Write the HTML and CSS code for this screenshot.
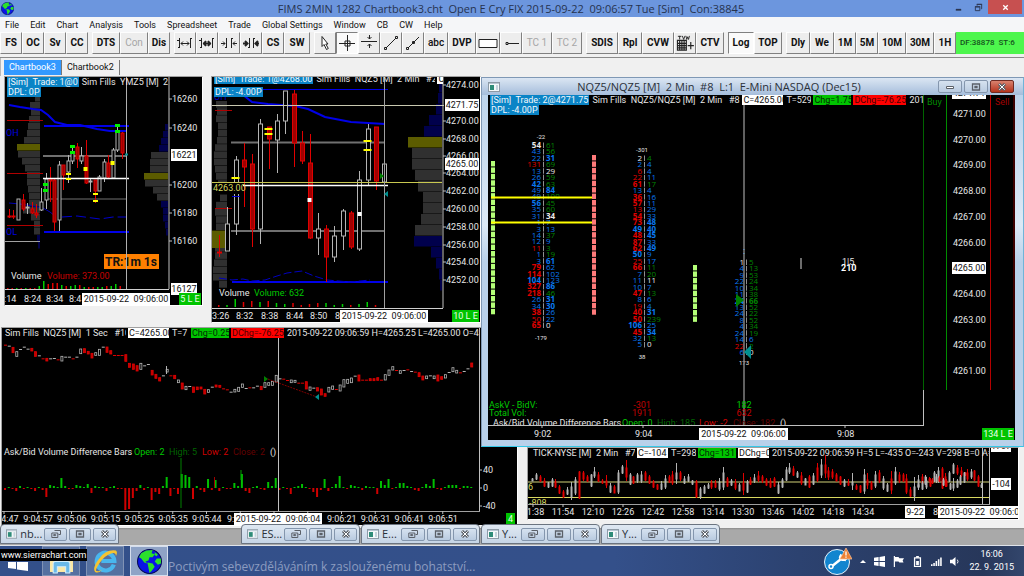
FILE: index.html
```html
<!DOCTYPE html>
<html lang="en">
<head>
  <meta charset="UTF-8" />
  <meta name="viewport" content="width=device-width, initial-scale=1.0" />
  <title>FIMS 2MIN 1282 Chartbook3.cht</title>
  <link rel="stylesheet" href="styles.css">
</head>
<body>
  <svg class="defs" aria-hidden="true">
    <symbol id="globe" viewBox="0 0 24 24">
      <circle cx="12" cy="12" r="11.5" fill="#0a14e6" stroke="#050a50" />
      <path d="M4 4 L9 1.5 L15 1 L14 4 L17 5 L15 8 L12 8 L11 11 L8 12 L10 14 L7 13 L4 9 L2 8Z M10 13 L15 14 L17 17 L14 21 L12 23 L11 18Z M17 3 L20 5 L19 7 L17 6Z M19 9 L23 9 L23 14 L20 15 L17 12Z" fill="#2be02b" />
    </symbol>
    <symbol id="docicon" viewBox="0 0 12 10">
      <rect x=".5" y=".5" width="11" height="9" fill="#f4f8fa" stroke="#8d9aa6" />
      <path d="M1 1h10v1H1z" fill="#b7c6d2" />
      <rect x="2" y="3" width="4" height="5" fill="#2f8c78" />
      <rect x="8" y="3" width="2" height="5" fill="#c3d3dc" />
    </symbol>
    <symbol id="restore" viewBox="0 0 10 8">
      <path d="M3.5 .5h6v4h-2M.8 3h6v4.5h-6zM2.7 4.6h2v1h-2z" fill="none" stroke="#5b6068" />
    </symbol>
    <symbol id="maximize" viewBox="0 0 10 8">
      <path d="M1.5 1h7v6h-7zM4 3.5h2v1H4z" fill="none" stroke="#5b6068" stroke-width="1.3" />
    </symbol>
    <symbol id="close" viewBox="0 0 10 8">
      <path d="M2 1l6 6M8 1l-6 6" stroke="#5b6068" stroke-width="3" />
      <path d="M2.3 1.3l5.4 5.4M7.7 1.3L2.3 6.7" stroke="#fff" stroke-width="1" />
    </symbol>
  </svg>

  <header class="titlebar">
    <svg class="app-icon"><use href="#globe" /></svg>
    <h1>FIMS 2MIN 1282 Chartbook3.cht&nbsp; Open E Cry FIX 2015-09-22&nbsp; 09:06:57 Tue [Sim]&nbsp; Con:38845</h1>
    <div class="sys">
      <button aria-label="Minimize"><svg viewBox="0 0 10 10"><path d="M2 7.500h6" stroke="#2b3550" stroke-width="2" /></svg></button>
      <button aria-label="Restore"><svg viewBox="0 0 10 10"><path d="M1.500 4.500h5v4h-5zM1 4h6M3.500 3V1.500h5v5H8M3 1.500h6" fill="none" stroke="#2b3550" /></svg></button>
      <button class="sys-close" aria-label="Close"><svg viewBox="0 0 10 10"><path d="M2.500 2.500l5 5M7.500 2.500l-5 5" stroke="#fff" stroke-width="1.500" /></svg></button>
    </div>
  </header>

  <nav class="menubar">
    <button>File</button><button>Edit</button><button>Chart</button><button>Analysis</button><button>Tools</button><button>Spreadsheet</button><button>Trade</button><button>Global Settings</button><button>Window</button><button>CB</button><button>CW</button><button>Help</button>
  </nav>

  <div class="toolbar">
    <div class="group">
      <button class="w22">FS</button><button class="w22">OC</button><button class="w22">Sv</button><button class="w22">CC</button>
    </div>
    <div class="group">
      <button class="w28">DTS</button><button class="w28" disabled>Con</button><button class="w22">Dis</button>
    </div>
    <div class="group">
      <button class="w22" aria-label="Increase bar spacing"><svg viewBox="0 0 16 16"><path d="M2.500 3v10M1 12.500h2M13.500 3v10M13 3.500h2M0 5.500h2M4 8.500h8M6 6.500l-2 2 2 2M10 6.500l2 2-2 2" /></svg></button>
      <button class="w22" aria-label="Increase bar spacing more"><svg viewBox="0 0 16 16"><path d="M2.500 3v10M1 12.500h2M13.500 3v10M13 3.500h2M0 5.500h2" /><path d="M4 8.500h8M7 6l-2 2.500 2 2.500M9 6l2 2.500-2 2.500" stroke-width="2" /></svg></button>
      <button class="w22" aria-label="Decrease bar spacing"><svg viewBox="0 0 16 16"><path d="M5.500 3v10M4 12.500h2M10.500 3v10M10 3.500h2M0 8.500h4M2 6.500l2 2-2 2M16 8.500h-4M14 6.500l-2 2 2 2" /></svg></button>
      <button class="w22" aria-label="Decrease bar spacing more"><svg viewBox="0 0 16 16"><path d="M6.500 3v10M5 12.500h2M10.500 3v10M10 3.500h2" /><path d="M0 8.500h5M2 6l2.500 2.500L2 11M16 8.500h-4M15 6l-2.500 2.500L15 11" stroke-width="2" /></svg></button>
      <button class="w22">CS</button><button class="w26">SW</button>
    </div>
    <div class="group">
      <button class="w22" aria-label="Pointer"><svg viewBox="0 0 16 16"><path d="M5 1.500v10l2-2 2.500 5 1.800-1-2.500-4.500H11z" fill="#fff" /></svg></button>
      <button class="w22 on" aria-label="Chart values"><svg viewBox="0 0 16 16"><path d="M8.500 0v16M0 8.500h17M6 6h5v5H6z" /></svg></button>
      <button class="w22" aria-label="Horizontal line"><svg viewBox="0 0 16 16"><path d="M0 6.500h16M8.500 0v4M6.500 2l2 2 2-2M8.500 13V9M6.500 11l2-2 2 2" /></svg></button>
      <button class="w22" aria-label="Line"><svg viewBox="0 0 16 16"><path d="M3 13L13 3M1.500 12.500h2v2h-2zM12.500 1.500h2v2h-2z" /></svg></button>
      <button class="w22" aria-label="Ray"><svg viewBox="0 0 16 16"><path d="M3 13L14 2M1.500 12.500h2v2h-2zM7.500 6.500h2v2h-2z" /></svg></button>
      <button class="w24 plain">abc</button><button class="w28">DVP</button>
      <button class="w24" aria-label="Rectangle"><svg class="wide" viewBox="0 0 20 16"><path d="M1 4.500h18v8H1z" fill="#fff" /></svg></button>
      <button class="w22" aria-label="Extended line"><svg viewBox="0 0 16 16"><path d="M3 7.500h2v2H3zM5 8.500h11" /></svg></button>
      <button class="w30" disabled>TC 1</button><button class="w30" disabled>TC 2</button>
    </div>
    <div class="group">
      <button class="w32">SDIS</button><button class="w24">Rpl</button><button class="w32">CVW</button>
      <button class="w22" aria-label="Trade volume window"><svg class="wide" viewBox="0 0 20 18"><path d="M2 1.500h4M4 1v4M7 1l1.500 4L10 1M11 1l1 4 1-3 1 3 1-4" /><path d="M1.500 6h10v11h-10zM1.500 9.500h10M1.500 12h10M1.500 14.500h10M4 6v11M6.500 6v11M9 6v11M13 12h7M16.500 8v8" stroke-width="1.300" /></svg></button>
      <button class="w28">CTV</button>
    </div>
    <div class="group">
      <button class="w26 on">Log</button><button class="w28">TOP</button>
    </div>
    <div class="group grow">
      <button class="w24">Dly</button><button class="w24">We</button><button class="w22">1M</button><button class="w22">5M</button><button class="w28">10M</button><button class="w28">30M</button><button class="w22">1H</button>
      <output class="feed">DF:38878&nbsp; ST:6</output>
    </div>
  </div>

  <div class="booktabs">
    <button class="book active">Chartbook3</button><button class="book">Chartbook2</button>
  </div>

  <main class="workspace">
    <section class="win win-ym">
      <svg id="ym" class="chart" viewBox="5 77 197 228"></svg>
      <div class="study">
        <span class="sim">[Sim]  Trade: 1@0</span><span class="cell">Sim Fills  YMZ5 [M]  2</span>
      </div>
      <span class="sim dpl">DPL: 0P</span>
    </section>

    <section class="win win-nq">
      <svg id="nq" class="chart" viewBox="212 77 268 245"></svg>
      <div class="study cut">
        <span class="sim">[Sim]  Trade: 1@4268.00</span><span class="cell name-nq">Sim Fills  NQZ5 [M]  2 Min   #2</span><span class="cell last">C</span>
      </div>
      <span class="sim dpl">DPL: -4.00P</span>
    </section>

    <section class="win win-sec">
      <svg id="sec" class="chart" viewBox="2 328 515 197"></svg>
      <div class="study">
        <span class="cell name-sec">Sim Fills  NQZ5 [M]  1 Sec   #10</span><span class="cell price last">C=4265.00</span><span class="cell count-s">T=7</span><span class="cell chg">Chg=0.25</span><span class="cell dchg">DChg=-76.25</span><span class="cell rest">2015-09-22 09:06:59 H=4265.25 L=4265.00 O=4265</span>
      </div>
    </section>

    <section class="win win-tick">
      <svg id="tick" class="chart" viewBox="528 448 490 71"></svg>
      <div class="study">
        <span class="cell name-tick">TICK-NYSE [M]  2 Min   #7</span><span class="cell tickval last">C=-104</span><span class="cell count">T=298</span><span class="cell chg">Chg=131</span><span class="cell tickval last">DChg=0</span><span class="cell rest">2015-09-22 09:06:59 H=5 L=-435 O=-243 V=298 B=0 A=0</span>
      </div>
    </section>

    <section class="mdi">
      <div class="mdi-title">
        <svg class="doc"><use href="#docicon" /></svg>
        <h2>NQZ5/NQZ5 [M]&nbsp; 2 Min&nbsp; #8&nbsp; L:1&nbsp; E-Mini NASDAQ (Dec15)</h2>
        <div class="mdi-buttons">
          <button aria-label="Minimize"><svg viewBox="0 0 10 8"><path d="M1.500 3.500h7v2h-7z" fill="#fff" stroke="#5b6068" /></svg></button>
          <button aria-label="Maximize"><svg><use href="#maximize" /></svg></button>
          <button class="red" aria-label="Close"><svg><use href="#close" /></svg></button>
        </div>
      </div>
      <div class="mdi-client">
        <svg id="foot" class="chart" viewBox="488 95 527 345"></svg>
        <div class="study">
          <span class="sim">[Sim]  Trade: 2@4271.75</span><span class="cell name-foot">Sim Fills  NQZ5/NQZ5 [M]  2 Min   #8</span><span class="cell price last">C=4265.00</span><span class="cell count">T=529</span><span class="cell chg">Chg=1.75</span><span class="cell dchg">DChg=-76.25</span><span class="cell rest">2015</span>
        </div>
        <span class="sim dpl">DPL: -4.00P</span>
      </div>
    </section>

    <div class="minimized" id="minimized"></div>
  </main>

  <footer class="taskbar">
    <p class="site">www.sierrachart.com</p>
    <div class="apps">
      <button class="app start" aria-label="Start"><svg viewBox="0 0 20 20"><path d="M0 4l8-1v7H0zM9 3l11-2v9H9zM0 11h8v7l-8-1zM9 11h11v9L9 18.500z" fill="#fff" /></svg></button>
      <button class="app" aria-label="Explorer"><svg viewBox="0 0 24 24"><path d="M1 5h8l1 2h13v15H1z" fill="#f3d372" /><path d="M1 9h22v13H1z" fill="#fbe9a6" /><path d="M4 23v-9q0-2 2-2h12q2 0 2 2v9h-4v-6H8v6z" fill="#69b9e8" stroke="#d4eefc" /></svg></button>
      <button class="app" aria-label="Internet Explorer"><svg viewBox="0 0 24 24"><path d="M20 15A8.500 8.500 0 1 1 20.500 11.500H8" fill="none" stroke="#49b7ee" stroke-width="4" /><path d="M2 22Q-1 18 6 9T22 1.500Q24 3 22 7Q22 3 18 4Q11 6 6 14T4 21Q6 22 9 20Q5 24 2 22z" fill="#f5c431" /></svg></button>
      <button class="app running" aria-label="Sierra Chart"><svg><use href="#globe" /></svg></button>
    </div>
    <p class="motto">Poctivým sebevzděláváním k zaslouženému bohatství...</p>
    <div class="tray">
      <svg class="wrench" viewBox="0 0 28 28"><circle cx="13" cy="15" r="12.500" fill="#1285cf" stroke="#e6f2fb" /><path d="M7 20L17 12M17 12l1-4M17 12l5 1M17.500 7.500q-3 4 0 5t5-1" fill="none" stroke="#fff" stroke-width="2.400" /><circle cx="7" cy="19.500" r="2" fill="#1285cf" stroke="#fff" stroke-width="1.500" /><path d="M22 1l6 11H16z" fill="#ee8133" stroke="#f9c29b" stroke-width=".7" /><path d="M22 4.500v4M22 9.500v1.300" stroke="#fff" stroke-width="1.300" /></svg>
      <svg class="t-up" viewBox="0 0 6 4"><path d="M0 4l3-3 3 3z" fill="#fff" /></svg>
      <svg class="t-icon" viewBox="0 0 12 12"><path d="M0 2l5-.800V5.500H0zM6 1l6-1v5.500H6zM0 6.500h5v4.300L0 10zM6 6.500h6V12l-6-1z" fill="#fff" /></svg>
      <svg class="t-icon" viewBox="0 0 12 12"><path d="M1.500 0v12" stroke="#fff" stroke-width="1.300" /><path d="M2 1h4l1 1.500h5L10.500 5l1 2H7L6 6H2z" fill="#fff" /></svg>
      <svg class="t-icon" viewBox="0 0 12 12"><path d="M2.800 2h6.400v9.500H2.800z" fill="none" stroke="#fff" stroke-width="1.400" /><path d="M4.500 0h3v2h-3zM4.500 5.500h3v4.500h-3z" fill="#fff" /></svg>
      <svg class="t-icon" viewBox="0 0 12 12"><path d="M0 9h1.700v2H0zM2.500 7.500h1.700V11H2.500zM5 5.500h1.700V11H5zM7.500 3.500h1.700V11H7.500zM10 1.500h1.700V11H10z" fill="#fff" /></svg>
      <svg class="t-icon" viewBox="0 0 12 12"><path d="M0 4h2.500L6 1v10L2.500 8H0z" fill="#fff" /><path d="M8 4q1.500 2 0 4" fill="none" stroke="#fff" /></svg>
      <p class="clock">16:06<br>22. 9. 2015</p>
    </div>
  </footer>

  <script src="charts.js"></script>
</body>
</html>
```

FILE: styles.css
```css
* {
  margin: 0;
  padding: 0;
  box-sizing: border-box;
}

body {
  display: flex;
  flex-direction: column;
  height: 100vh;
  overflow: hidden;
  background: #f0f0f0;
  color: #111;
  font-family: Roboto, "Open Sans", sans-serif;
  font-size: 9px;
  line-height: 10px;
}

button {
  font: inherit;
  color: inherit;
  background: none;
  border: 0;
}

svg {
  display: block;
}

.defs {
  position: absolute;
  width: 0;
  height: 0;
}

/* title bar */
.titlebar {
  display: flex;
  align-items: center;
  height: 17px;
  flex: none;
  background: #6c96de;
}

.app-icon {
  width: 13px;
  height: 13px;
  margin-left: 1px;
}

h1,
h2 {
  flex: 1;
  text-align: center;
  font-family: "Open Sans", "Noto Sans", sans-serif;
  font-size: 11px;
  font-weight: 400;
}

h1 {
  color: #26334f;
  padding-left: 60px;
}

.sys {
  display: flex;
  align-self: flex-start;
}

.sys button {
  width: 20px;
  height: 14px;
  display: flex;
  align-items: center;
  justify-content: center;
}

.sys svg {
  width: 9px;
  height: 9px;
}

.sys .sys-close {
  width: 34px;
  margin-right: 2px;
  background: #c75050;
}

/* menu */
.menubar {
  display: flex;
  gap: 11px;
  height: 15px;
  flex: none;
  align-items: center;
  padding-left: 5px;
  background: #f5f6f8;
}

/* toolbar */
.toolbar {
  display: flex;
  gap: 4px;
  height: 26px;
  flex: none;
  border-bottom: 1px solid #8a8a8a;
  font-size: 10px;
  font-weight: 700;
}

.group {
  display: flex;
  height: 22px;
}

.grow {
  flex: 1;
}

.group button {
  display: flex;
  align-items: center;
  justify-content: center;
  border: 1px solid #fdfdfd;
  border-right-color: #808080;
  border-bottom-color: #808080;
  background: #ededed;
  white-space: nowrap;
}

.group button:disabled {
  color: #a6a6a6;
  font-weight: 400;
}

.group .on {
  background: #fafafa;
  border-color: #808080 #fff #fff #808080;
}

.group .plain {
  font-weight: 500;
}

.group svg {
  width: 16px;
  height: 16px;
  fill: none;
  stroke: #222;
}

.group .wide {
  width: 20px;
}

.w22 { width: 22px; }
.w24 { width: 24px; }
.w26 { width: 26px; }
.w28 { width: 28px; }
.w30 { width: 30px; }
.w32 { width: 32px; }

.feed {
  flex: 1;
  overflow: hidden;
  white-space: nowrap;
  padding-left: 4px;
  background: #4df64d;
  color: #14501c;
  font-size: 8px;
  font-weight: 500;
  line-height: 22px;
}

.booktabs {
  display: flex;
  height: 18px;
  flex: none;
  padding-left: 3px;
  border-left: 1px solid #b8b8b8;
  align-items: center;
}

.book {
  height: 15px;
  padding: 0 5px;
  border-right: 1px solid #777;
}

.book.active {
  background: #3399ff;
  color: #fff;
}

/* chart windows */
.workspace {
  position: relative;
  flex: 1;
  background: linear-gradient(#f0f0f0 452px, #8a8a8a 452px, #a9a9a9 454px);
  color: #e6e6e6;
}

.win {
  position: absolute;
  border: 1px solid #a0a0a0;
  border-right-color: #fff;
  border-bottom-color: #fff;
  background: #000;
  overflow: hidden;
}

.win-ym { left: 4px; top: 0; width: 199px; height: 230px; }
.win-nq { left: 211px; top: 0; width: 270px; height: 247px; }
.win-sec { left: 1px; top: 251px; width: 517px; height: 199px; }
.win-tick { left: 527px; top: 371px; width: 492px; height: 73px; }

.chart {
  width: 100%;
  height: 100%;
}

.chart text {
  fill: #e6e6e6;
  white-space: pre;
}

.study {
  position: absolute;
  left: 2px;
  top: 0;
  display: flex;
  gap: 2px;
  white-space: pre;
}

.win-ym .study { width: 162px; overflow: hidden; }
.win-nq .study { width: 229px; overflow: hidden; }
.win-sec .study { width: 475px; }
.win-tick .study { left: 4px; width: 457px; }
.mdi-client .study { width: 433px; }

.study.cut {
  top: -3px;
}

.sim {
  background: #0a84c6;
  color: #f2f8fc;
  padding: 0 1px;
  flex: none;
}

.dpl {
  position: absolute;
  left: 2px;
  top: 10px;
  white-space: pre;
}

.cell {
  overflow: hidden;
  flex: none;
  padding-left: 1px;
}

.name-nq { width: 120px; }
.name-sec { width: 122px; }
.name-tick { width: 103px; }
.name-foot { width: 149px; }
.price { width: 41px; }
.tickval { width: 31px; }
.count { width: 26px; }
.count-s { width: 18px; }
.last { background: #fff; color: #111; }
.chg { width: 38px; background: #00c400; color: #032803; }
.dchg { width: 53px; background: #f00; color: #480000; }
.rest { flex: 1; }

/* floating footprint window */
.mdi {
  position: absolute;
  left: 481px;
  right: 0;
  top: 1px;
  height: 370px;
  display: flex;
  flex-direction: column;
  padding: 0 8px 6px 6px;
  background: linear-gradient(#b9d1ea, #dce9f6 40%, #b9d1ea 50%);
  border: 1px solid #7f98b5;
  border-bottom-color: #35c8e8;
  border-right-color: #6fb4d8;
}

.mdi-title {
  display: flex;
  align-items: center;
  height: 17px;
  margin: 0 -8px 0 -6px;
  padding: 0 9px 0 6px;
  background: linear-gradient(#dbe6f3, #a5bddb);
  color: #2a3038;
}

.doc {
  width: 12px;
  height: 10px;
}

.mdi-buttons {
  display: flex;
  gap: 2px;
}

.mdi-buttons button,
.mini button {
  display: flex;
  align-items: center;
  justify-content: center;
  width: 24px;
  height: 13px;
  border: 1px solid #8496ad;
  border-radius: 2px;
  background: linear-gradient(#d6e2f0, #b9cbe0);
}

.mdi-buttons .red {
  background: linear-gradient(#d9826f, #b5331c);
  border-color: #6e2a22;
}

.mdi-buttons svg,
.mini button svg {
  width: 10px;
  height: 8px;
}

.mdi-client {
  position: relative;
  flex: 1;
  min-height: 0;
  background: #000;
}

#foot .rows {
  font-family: "Open Sans", "Noto Sans", sans-serif;
  font-size: 8px;
}

/* minimized chart windows */
.minimized {
  position: absolute;
  left: 0;
  bottom: 1px;
  display: flex;
  gap: 1px;
}

.mini {
  display: flex;
  align-items: center;
  gap: 2px;
  width: 119px;
  height: 20px;
  padding: 0 2px 0 5px;
  border: 1px solid #6b7480;
  border-radius: 4px 4px 0 0;
  background: linear-gradient(#dfe8f2, #c6d5e6);
  color: #2a3038;
  font-family: "Open Sans", "Noto Sans", sans-serif;
  font-size: 11px;
}

.mini:first-child {
  margin-right: 121px;
}

.mini span {
  flex: 1;
  padding-left: 1px;
}

/* task bar */
.taskbar {
  position: relative;
  display: flex;
  align-items: center;
  height: 31px;
  flex: none;
  border-top: 1px solid #dfe3ea;
  background: linear-gradient(90deg, #33508a, #34508a 60%, #2c4270 78%, #27375a 96%, #33466c);
  color: #fff;
}

.site {
  position: absolute;
  left: 0;
  top: 3px;
  height: 12px;
  padding: 0 1px;
  background: #000;
  line-height: 12px;
  z-index: 1;
}

.apps {
  display: flex;
  gap: 6px;
  height: 30px;
}

.app {
  display: flex;
  align-items: center;
  justify-content: center;
  width: 38px;
  border: 1px solid #8193b5;
  background: #5570a0;
}

.app svg {
  width: 25px;
  height: 25px;
}

.start {
  width: 36px;
  border: 0;
  background: none;
}

.start svg {
  width: 20px;
  height: 20px;
}

.app.running {
  background: #8fa3c6;
  border-color: #d5deed;
}

.motto {
  flex: 1;
  font-family: "Open Sans", "Noto Sans", sans-serif;
  font-size: 12px;
  line-height: 14px;
  align-self: flex-end;
  color: #8c9cc0;
  padding-bottom: 2px;
}

.tray {
  display: flex;
  align-items: center;
  gap: 8px;
  padding-right: 10px;
}

.wrench {
  width: 28px;
  height: 28px;
}

.t-up {
  width: 6px;
  height: 4px;
}

.t-icon {
  width: 11px;
  height: 11px;
}

.clock {
  text-align: center;
  line-height: 13px;
}
```

FILE: charts.js
```javascript
const WHITE = '#b4b4b4';
const RED = '#e00000';

function rect(x, y, w, h, fill, extra = '') {
  return `<rect x="${x}" y="${y}" width="${w}" height="${h}" fill="${fill}" ${extra}/>`;
}

function line(x1, y1, x2, y2, color, w = 1) {
  return `<line x1="${x1}" y1="${y1}" x2="${x2}" y2="${y2}" stroke="${color}" stroke-width="${w}"/>`;
}

function poly(points, color, w = 1, dash = '') {
  return `<polyline points="${points}" fill="none" stroke="${color}" stroke-width="${w}" stroke-dasharray="${dash}"/>`;
}

// y is the middle of the text
function text(x, y, str, fill = '#e6e6e6', more = '') {
  return `<text x="${x}" y="${y + 3}" style="fill:${fill}" ${more}>${str}</text>`;
}

function tag(x, y, w, str, bg = '#fff', fg = '#111') {
  return rect(x, y - 6, w, 12, bg) + text(x + w / 2, y, str, fg, 'text-anchor="middle"');
}

// [x, high, top, bottom, low, red?]
function candles(list, w) {
  return list.map(([x, hi, top, bot, lo, down]) => {
    const c = down ? RED : WHITE;
    return line(x + 0.5, hi, x + 0.5, lo, c) +
      rect(x - w / 2 + 0.5, top, w, Math.max(bot - top, 1), down ? '#a00000' : '#000', `stroke="${c}"`);
  }).join('');
}

// horizontal volume profile, growing left from the right edge
function profile(lefts, right, y, step, olive, navyBefore, navyAfter) {
  return lefts.map((x, i) => {
    let c = '#303030';
    if (i === olive) c = '#5c5c00';
    else if (i < navyBefore || i >= navyAfter) c = '#00004c';
    return rect(x, y + i * step, right - x, step - 0.5, c);
  }).join('');
}

function volume(x, step, base, heights) {
  return heights.map((h, i) => rect(x + i * step, base - Math.abs(h), 1.500, Math.abs(h), h > 0 ? '#00d000' : '#e00000')).join('');
}

function marks(list, w, h, c) {
  return list.map(([x, y]) => rect(x - w / 2 + 0.5, y, w, h, c)).join('');
}

function draw(id, parts) {
  document.getElementById(id).innerHTML = parts.join('');
}

// YM 2 min
draw('ym', [
  profile([38, 35, 35, 30, 31, 29, 28, 27, 24, 17, 18, 22, 25, 27, 27, 28, 29, 29, 23, 31, 34, 34, 37, 38], 40, 81, 7, 9, 0, 22),
  profile([165, 163, 161, 159, 151, 150, 150, 144, 145, 153, 157, 161, 163, 163, 165, 166], 168, 124, 7, 7, 4, 11),
  line(7, 120.5, 43, 120.5, '#b00000'), line(7, 173.5, 43, 173.5, '#b00000'), line(7, 225.5, 43, 225.5, '#b00000'),
  line(43, 156, 127, 156, '#707070', 2), line(47, 199, 127, 199, '#707070', 1), line(5, 241.5, 40, 241.5, '#a0a0a0'),
  line(44, 126, 129, 126, '#0000e8', 2), line(44, 232, 129, 232, '#0000e8', 2),
  poly('9,105 20,107 33,109 41,110 48,115 55,122 67,125 80,125 97,129 110,131 127,131', '#0000e8', 2),
  poly('9,203 20,204 33,206 43,208 50,212 55,216', '#0000b0'),
  poly('62,217 77,216 100,219 113,217 127,217', '#0000d0', 1, '10 4'),
  candles([
    [9, 209, 216, 217, 218, 1], [13, 210, 216, 217, 219, 1], [18, 199, 199, 220, 220], [23, 194, 200, 209, 211, 1],
    [27, 203, 207, 208, 214], [32, 202, 209, 213, 214, 1], [36, 204, 213, 215, 218, 1], [41, 188, 202, 210, 211],
    [46, 173, 179, 200, 209], [50, 167, 179, 181, 202, 1], [54, 178, 180, 222, 231, 1], [59, 161, 165, 220, 231],
    [63, 165, 165, 175, 190, 1], [68, 155, 161, 172, 183], [72, 146, 152, 161, 164], [77, 143, 147, 159, 168, 1],
    [81, 147, 156, 161, 164], [86, 140, 156, 183, 184, 1], [90, 179, 181, 182, 192], [95, 180, 180, 191, 203, 1],
    [99, 175, 177, 191, 191], [104, 159, 162, 178, 182], [108, 155, 163, 177, 179, 1], [113, 148, 150, 178, 178],
    [117, 126, 131, 150, 152], [122, 132, 133, 153, 159, 1]
  ], 3),
  line(43, 178.5, 129, 178.5, '#fff', 1.5),
  marks([[45, 183], [45, 189], [72, 145], [72, 151], [117, 124], [117, 130]], 5, 3, '#00f000'),
  marks([[68, 173], [68, 178], [95, 193], [95, 200]], 5, 2, '#ff0'),
  marks([[85, 167], [112, 161]], 4, 4, '#ff0'),
  text(6, 133, 'OH', '#0000e0'), text(6, 232, 'OL', '#0000e0'),
  rect(104, 254, 55, 15, '#ff8000'), text(105, 263, 'TR:1m 1s', '#111', 'font-size="12" font-weight="700"'),
  text(11, 276, 'Volume'), text(47, 276, 'Volume: 373.00', '#c80000'),
  volume(7, 4.500, 289, [-1, -1, 1, -1, 1, -1, -1, 3, 8, -5, -6, -6, 4, -3, 3, 4, -4, 2, -2, -2, 2, 2, -3, 3, 5, -3]),
  line(126.5, 77, 126.5, 289, '#b0b0b0'), line(125, 154.500, 128, 154.500, '#009090', 2),
  line(169, 77, 169, 289, '#c0c0c0'), line(5, 289.5, 169, 289.5, '#d0d0d0'),
  ...[[99, 16260], [128, 16240], [185, 16200], [213, 16180], [241, 16160]].map(([y, t]) => line(169, y, 172, y, '#c0c0c0') + text(172, y, t)),
  tag(171, 155, 26, '16221'), tag(171, 289, 26, '16127'),
  text(4, 299, ':14'), text(24, 299, '8:24'), text(46, 299, '8:34'), text(69, 299, '8:4'),
  tag(82, 299, 88, '2015-09-22  09:06:00'), tag(179, 299, 22, '5 L E', '#00c400', '#eaffea')
]);

// NQ 2 min
draw('nq', [
  profile([216, 217, 216, 218, 218, 217, 215, 214, 214, 215, 216, 218, 218, 220, 216, 215, 216, 216, 212, 212, 215, 215, 214, 213, 213, 219], 227, 101, 7.200, 18, 0, 99),
  rect(212, 236, 15, 12, '#5c5c00'),
  profile([439, 438, 436, 429, 424, 408, 412, 412, 415, 418, 423, 423, 421, 415, 414, 431, 436, 439, 440], 442, 82, 11, 5, 5, 14),
  text(214, 97, 'OH', '#0000c0'),
  line(215, 110.5, 232, 110.5, '#b00000'), line(215, 208.5, 232, 208.5, '#b00000'),
  line(231, 142.5, 384, 142.5, '#707070', 2), line(231, 231, 384, 231, '#707070', 2),
  line(260, 89.5, 388, 89.5, '#0000e8'), line(232, 282, 388, 282, '#0000e8', 2),
  poly('243,95 252,102 268,104 295,106 308,109 325,117 351,122 368,123 385,124', '#0000e8', 2),
  poly('219,278 232,280 243,279 252,281 265,280 277,276 287,273 302,271 314,276 327,280 350,282 370,280', '#0000c0', 1, '8 3'),
  candles([
    [219, 235, 252, 253, 257, 1], [227, 207, 224, 251, 251], [236, 156, 160, 224, 235], [244, 143, 160, 167, 207, 1],
    [252, 154, 164, 229, 247, 1], [260, 119, 124, 229, 244], [269, 127, 127, 139, 169, 1], [277, 114, 121, 140, 173],
    [285, 91, 91, 121, 134], [294, 90, 94, 143, 167, 1], [302, 131, 143, 161, 164, 1], [310, 134, 163, 238, 239, 1],
    [318, 213, 229, 238, 255], [326, 225, 229, 257, 282, 1], [334, 226, 236, 257, 262], [343, 209, 211, 236, 250],
    [351, 211, 213, 247, 249, 1], [359, 171, 180, 249, 251], [368, 124, 129, 180, 185], [376, 127, 127, 181, 190, 1],
    [384, 164, 164, 182, 182]
  ], 4),
  line(212, 105.5, 444, 105.5, '#c8c8b0'), line(212, 182.5, 442, 182.5, '#c8c850'), line(240, 185.5, 388, 185.5, '#fff', 1.5),
  rect(212, 183, 31, 11, '#000'), text(213, 188, '4263.00', '#d8d860'),
  marks([[268, 128], [268, 133], [235, 177], [367, 140], [367, 149]], 8, 2, '#ff0'),
  marks([[309, 198], [359, 212]], 4, 4, '#fff'),
  line(232, 196.500, 240, 196.500, '#0000d0'),
  text(219, 293, 'Volume'), text(254, 293, 'Volume: 632', '#00c800'),
  volume(218, 8.250, 307, [-2, 2, 8, -5, -6, 5, -6, 4, 3, -4, -2, -3, -4, 4, 2, 3, -2, 3, 5, -2]),
  line(384.5, 77, 384.5, 308, '#a0a0a0'),
  '<path d="M380 173l4 3-4 3z" fill="#008000"/><path d="M388 191l-4 3 4 3z" fill="#009090"/>',
  line(443, 77, 443, 308, '#c0c0c0'), line(212, 308.5, 443, 308.5, '#d0d0d0'),
  ...[[85, 4274], [121, 4270], [139, 4268], [156, 4266], [173, 4264], [191, 4262], [209, 4260], [227, 4258], [245, 4256], [262, 4254], [280, 4252]]
    .map(([y, t]) => line(443, y, 446, y, '#c0c0c0') + text(446, y, t + '.00')),
  tag(445, 105, 34, '4271.75'), tag(445, 164, 34, '4265.00'),
  text(212, 316, '3:26'), text(236, 316, '8:32'), text(261, 316, '8:38'), text(286, 316, '8:44'), text(310, 316, '8:50'), text(335, 316, '8'),
  tag(340, 316, 88, '2015-09-22  09:06:00'), tag(452, 316, 27, '10 L E', '#00c400', '#eaffea')
]);

// NQ 1 sec: middle and height of every bar
const seconds = `62r2 65w4 78r16 90w14 75w2 68w2 74w2 77r8 90r14 94w2 103r4 107r8 103w2 102w3 106r4 104w14 98w2 98w2 103r2 98w3
  82w14 80r12 86r8 95r14 90w8 85w18 68w2 77r16 85r10 93r2 93r2 93r2 102r20 124r12 128r16 133r16 127w18 124w2 120w3 146r14
  157r12 166r10 154w3 140w8 154r2 159r10 172w8 186r18 192w10 186w2 197r16 193r8 192r6 203r14 201w8 188w3 186r6 187r6
  193r2 196r3 203w3 200w8 196w12 185w10 192w2 190r4 190w3 185w4 192r10 183w14 180w8 178w12 164w20 163w3 164r2 168r3
  172w8 172w6 176r2 176r2 184r22 194w10 191w3 196r10 204r18 213r8 197w14 191w10 195r3 192w18 178w22 172w12 169w14
  155w3 162r18 167r4 167r2 167r6 167r6 165r8 167r4 160w16 146w16 133w10 138r4 144w8 138w3 136r5 141w3 143r4 152r12
  162r12 160w8 154w3 160w8 162r18 162r8 157w10 144w3 137w12 143w8 145r4 141w4 133w3 123r12`.trim().split(/\s+/);

const delta = [-2, 1, -1, -3, 2, -1, 1, -1, -3, 1, -2, -9, 3, 2, 1, 10, 2, -1, -1, 3, 2, 1, 4, -5, 2, 1, 1, -3, 1, 2, -1, -1,
  -22, -21, -10, -3, 3, -2, 1, -12, -4, -6, 2, 11, -8, -1, -6, 14, 13, 11, -11, 2, -2, -4, 9, -2, 8, -3, 1, -1, -1, 5, 2, 14,
  -3, -5, 1, 2, -1, -2, 6, 2, 10, -2, 1, -1, -6, 1, 2, 4, 1, -1, -4, -9, -2, 9, -3, 1, 4, 12, 1, -1, 3, 2, 1, -2,
  2, 1, 1, -6, 7, 3, 9, -1, 1, 5, 5, 2, 1, -2, -3, 1, 4, 2, 9, -1, -2, 1, 3, 3, 3, -1, 2, 2, 1];

draw('sec', [
  ...seconds.map((s, i) => {
    const [, y, c, h] = s.match(/(\d+)([rw])(\d+)/);
    const x = 4 + i * 3.760;
    const hh = Math.max(h / 3, 1);
    if (hh < 2) return rect(x, 324 + y / 3, 3, 1, c === 'r' ? RED : WHITE);
    return rect(x + 0.5, 324 + y / 3 - hh / 2, 2, hh, c === 'r' ? '#c00000' : '#000', `stroke="${c === 'r' ? RED : WHITE}" stroke-width=".8"`);
  }),
  line(166.500, 366, 166.500, 374, WHITE),
  poly('265,378 317,397', '#800000', 1, '2 1'),
  '<path d="M264 376l4 3-4 3z" fill="#008000"/><path d="M319 394l-4 3 4 3z" fill="#009090"/>',
  text(4, 452, 'Ask/Bid Volume Difference Bars'), text(134, 452, 'Open: 2', '#00c800'), text(169, 452, 'High: 5', '#006400'),
  text(202, 452, 'Low: 2', '#d00000'), text(233, 452, 'Close: 2', '#640000'), text(270, 452, '()'),
  ...delta.map((d, i) => rect(4 + i * 3.760, d > 0 ? 488 - d : 488, 2, Math.abs(d), d > 0 ? '#00c000' : '#d00000')),
  line(181, 458, 181, 508, '#008000'), line(214.500, 477, 214.500, 488, '#a00000'), line(241, 470, 241, 480, '#00a000'),
  line(278.5, 328, 278.5, 511, '#c0c0c0'),
  line(479.5, 328, 479.5, 511, '#c0c0c0'), line(2, 511.5, 480, 511.5, '#a0a0a0'),
  ...[[470, 40], [488, 0], [506, -40]].map(([y, t]) => line(479, y, 482, y, '#c0c0c0') + text(483, y, t)),
  ...['4:47', '9:04:57', '9:05:06', '9:05:15', '9:05:25', '9:05:35', '9:05:44', '', '', '', '9:06:21', '9:06:31', '9:06:41', '9:06:51']
    .map((t, i) => text(i ? 38 + (i - 1) * 33.750 : 10, 519, t, '#e6e6e6', 'text-anchor="middle"') + line(4 + i * 33.750, 511, 4 + i * 33.750, 514, '#c0c0c0')),
  text(227, 519, '9:'), tag(234, 519, 88, '2015-09-22  09:06:04'), tag(506, 519, 9, '4', '#00c400', '#eaffea')
]);

// TICK-NYSE: top, bottom and wick length of every bar
const ticks = `118w122,4 104w118,4 110r122,6 122r138,8 130w142,4 120w138,6 126r140,8 140r158,6 155r172,4 150w162,8 142w172,16
  120w160,8 96r174,4 100r118,8 112r122,6 106w138,4 96w108,14 105r122,10 122r130,6 124r136,18 138w156,8 140r158,4 100w157,10
  82w100,6 84r112,24 104w132,4 112r130,4 106w124,8 104w124,12 100r120,8 112r128,6 125r140,6 136r148,4 132w146,10 118w142,12
  110r126,6 104r130,10 100w116,30 100r118,8 116w128,8 112w122,10 124w132,4 125r170,6 148w172,8 140w160,6 134w144,6 128r142,8
  130r140,10 126w146,12 100w140,20 118r138,6 124w136,6 128r144,10 134w152,4 128r150,30 125w156,4 120r132,8 114w124,12 108r120,14
  112r124,8 120r134,6 124r140,10 118r138,6 134w158,8 120w142,6 90w120,8 84w96,14 88r104,10 100w112,6 108r130,12 118w134,4
  112r140,8 108w132,8 84r120,14 76w104,18 74r100,30 94r112,14 96r112,8 104r122,4 112r132,4 124w138,8 128r134,10 126w136,28
  138r148,6 138r156,4 104w154,18 120r136,20 130r146,8 104w138,12 100r124,10 118w144,10 136w152,6 116r150,22 96w128,16 104r124,8
  106r124,6 116r156,14 150r168,8 140w168,28 120w142,14 112r130,10 124w140,12 120r138,6 100w122,8 92w122,12 88r144,6 112r134,12
  98w122,6 76w98,8 84r100,10 94r104,12 99r106,4`.trim().split(/[\s]+/);
const ticksLate = '134w142,8 128w146,6 110w132,4 116r124,6 120r130,6 110w124,8 114r124,6 120w134,6 124r138,8 132w148,4 132w144,18 124w140,6 112w132,8 100w126,4 98r118,12 96w112,8 94r120,4 112r138,6 134w142,4'.split(' ');

function tickBars(list, x0, step) {
  return candles(list.map((s, i) => {
    const [, top, c, bot, wick] = s.match(/(\d+)([rw])(\d+),(\d+)/).map((v) => (isNaN(v) ? v : Number(v)));
    const y = (v) => Math.round(440 + v / 3);
    return [Math.round(x0 + i * step), y(top - wick), y(top), y(bot), y(bot + wick / 2), c === 'r'];
  }), 1);
}

draw('tick', [
  line(528, 482, 990, 482, '#8c8c50', 1.5), line(528, 497.5, 990, 497.5, '#d8d860'),
  tickBars(ticks, 532, 3.900), tickBars(ticksLate, 918, 3.500),
  text(528, 487, '6', '#d8d860'), text(529, 503, '-808', '#d8d860'),
  rect(528, 505, 490, 14, '#000'),
  line(982.5, 448, 982.5, 504, '#c0c0c0'), line(989.5, 448, 989.5, 504, '#c0c0c0'), line(528, 504.5, 990, 504.5, '#a0a0a0'),
  tag(991, 446, 20, '1707'), tag(991, 484, 20, '-104'),
  ...['11:38', '11:54', '12:10', '12:26', '12:42', '12:58', '13:14', '13:30', '13:46', '14:02', '14:18', '14:34']
    .map((t, i) => text(533 + i * 30, 512, t, '#e6e6e6', 'text-anchor="middle"') + line(533 + i * 30, 504, 533 + i * 30, 507, '#c0c0c0')),
  tag(905, 512, 20, '9-22'), text(933, 512, '8'), tag(938, 512, 88, '2015-09-22  09:06:00')
]);

// footprint columns: bid and ask with colour letter, bold in upper case
const ink = { w: '#e8e8e8', b: '#0a78f0', r: '#e00000', g: '#008400' };

function footprint(x, y, rows) {
  const part = (s, px, py, anchor) => {
    const [, c, n] = s.match(/([a-zA-Z])(\d+)/);
    const bold = c !== c.toLowerCase() ? 'font-weight="700"' : '';
    return text(px, py, n, ink[c.toLowerCase()], `text-anchor="${anchor}" ${bold}`);
  };
  return '<g class="rows">' + rows.trim().split(/\s+/).map((r, i) => {
    const [bid, ask] = r.split('|');
    const ry = y + i * 6.430;
    return part(bid, x - 2, ry, 'end') + part(ask, x + 3, ry, 'start') + rect(x, ry - 2.500, 1, 5.500, '#909090');
  }).join('') + '</g>';
}

function blocks(x, y, n, c) {
  let out = '';
  for (let i = 0; i < n; i++) out += rect(x, y + i * 6.430, 4, 5.400, c);
  return out;
}

draw('foot', [
  text(541, 136, '-22', '#e6e6e6', 'text-anchor="middle" font-size="6"'),
  footprint(543, 145, 'W54|g61 b43|g56 b22|B31 r131|g69 b13|w29 b26|g59 B42|g63 b49|B84 b49|g100 B56|g45 b35|g60 b31|W34 b1|b7 b3|b13 b14|g37 b12|b9 r11|g3 b1|g19 b3|B61 R79|b62 R114|b102 B104|b123 R327|B86 R218|g46 b26|B31 b34|B30 R38|b26 r50|b22 R65|w0'),
  text(541, 337, '-179', '#e6e6e6', 'text-anchor="middle" font-size="6"'),
  text(642, 149, '-301', '#e6e6e6', 'text-anchor="middle" font-size="6"'),
  footprint(644, 158, 'w2|g4 b2|b4 r6|b4 r22|b11 R61|g17 b13|b4 R36|b16 R57|b11 r13|b29 R54|b33 R73|B48 B49|B40 R48|B45 R87|b33 R62|B49 B50|b9 r25|b17 R66|g11 b7|g20 b11|w11 b10|b7 R47|g13 b8|b6 r19|b4 R40|B31 R50|g239 B106|b25 R45|B34 b32|g13 b5|w0'),
  text(642, 356, '38', '#e6e6e6', 'text-anchor="middle" font-size="6"'),
  footprint(746, 262, 'w1|g5 b4|g13 b9|g53 b22|g24 b10|g34 b11|g38 B24|G66 b13|g52 b24|g22 b8|g52 b4|g34 b24|g19 b14|b6 r22|g2 b6|w0'),
  text(744, 362, '173', '#e6e6e6', 'text-anchor="middle" font-size="6"'),
  blocks(491, 161, 24, '#b4ff78'), blocks(592, 155, 25, '#ff7a7a'), blocks(693, 265, 9, '#b4ff78'),
  line(491, 197.5, 592, 197.5, '#ff0', 2), line(491, 222.5, 592, 222.5, '#ff0', 2),
  line(744, 95, 744, 425, '#808080', 1.500),
  text(743, 251, ':', '#6ac0ff'),
  '<path d="M736 294l8 6-8 7z" fill="#008000"/><path d="M751 345l-7 7 7 7z" fill="#009090"/>',
  line(801, 258, 801, 269, '#909090', 1.500),
  text(842, 262, '1|5'), rect(840, 265, 18, 7, '#000'), text(841, 268, '210', '#fff', 'font-weight="700"'),
  text(489, 405, 'AskV - BidV:', '#00c800'), text(489, 413, 'Total Vol:', '#00c800'),
  text(642, 405, '-301', '#c00000', 'text-anchor="middle"'), text(642, 413, '1911', '#c00000', 'text-anchor="middle"'),
  text(744, 405, '182', '#00c800', 'text-anchor="middle"'), text(744, 413, '632', '#c80000', 'text-anchor="middle"'),
  text(493, 423, 'Ask/Bid Volume Difference Bars'), text(622, 423, 'Open: 0', '#00c800'), text(657, 423, 'High: 185', '#006400'),
  text(699, 423, 'Low: -2', '#d00000'), text(733, 423, 'Close: 182', '#640000'), text(780, 423, '()'),
  rect(488, 425, 436, 4, '#000'),
  line(488, 425.5, 924, 425.5, '#c0c0c0'), line(923.5, 95, 923.5, 390, '#006400'), line(923.5, 390, 923.5, 425, '#c0c0c0'),
  line(946.5, 95, 946.5, 390, '#008c00'), line(990.5, 95, 990.5, 390, '#b40000'), line(1014, 95, 1014, 390, '#780000'),
  text(927, 102, 'Buy', '#008c00'), text(995, 102, 'Sell', '#a00000'),
  tag(952, 93, 34, '4271.71'),
  ...[4271, 4270, 4269, 4268, 4267, 4266, 4265, 4264, 4263, 4262, 4261].map((t, i) =>
    t === 4265 ? tag(952, 268, 34, '4265.00') : text(953, Math.round(114 + i * 25.700), t + '.00')),
  text(534, 434, '9:02'), text(635, 434, '9:04'), text(837, 434, '9:08'),
  line(542, 425, 542, 428, '#c0c0c0'), line(643, 425, 643, 428, '#c0c0c0'), line(845, 425, 845, 428, '#c0c0c0'),
  tag(699, 434, 89, '2015-09-22  09:06:00'), tag(982, 434, 32, '134 L E', '#00c400', '#eaffea')
]);

document.getElementById('minimized').innerHTML = ['nb...', 'ES...', 'E...', 'Y...', 'Y...'].map((name) => `
  <div class="mini">
    <svg class="doc"><use href="#docicon"/></svg><span>${name}</span>
    <button aria-label="Restore"><svg><use href="#restore"/></svg></button>
    <button aria-label="Maximize"><svg><use href="#maximize"/></svg></button>
    <button aria-label="Close"><svg><use href="#close"/></svg></button>
  </div>`).join('');
```
